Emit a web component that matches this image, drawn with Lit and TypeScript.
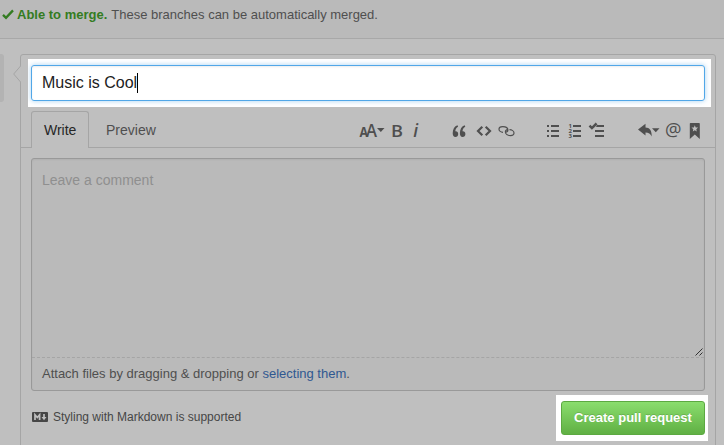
import { LitElement, html, css } from "lit";
import { customElement } from "lit/decorators.js";

@customElement("format-toolbar")
class FormatToolbar extends LitElement {
  static styles = css`
    :host { display: block; color: #4f4f4f; }
    .bar { display: flex; gap: 31px; }
    .group { display: flex; }
    svg { display: block; height: 20px; fill: currentColor; overflow: visible; }
    .text { font-family: "Open Sans", sans-serif; font-weight: 600; }
    .bold { font-weight: 700; }
    .italic { font-style: italic; }
    .num { font: bold 6px "Open Sans", sans-serif; }
    .line { fill: none; stroke: currentColor; }
    .a { gap: 7px; } .b { gap: 9px; } .c { gap: 7px; } .d { gap: 6px; }
    .star { fill: #bfbfbf; }
  `;
  render() {
    return html`<div class="bar">
      <div class="group a">
        <svg width="26" viewBox="0 0 26 20">
          <text class="text bold" x="0.500" y="16" font-size="13.500" textLength="8.500" lengthAdjust="spacingAndGlyphs">A</text>
          <text class="text" x="7" y="16" font-size="17.500" textLength="11" lengthAdjust="spacingAndGlyphs">A</text>
          <path d="M18 7h7.500l-3.700 4z"/>
        </svg>
        <svg width="11" viewBox="0 0 11 20"><text class="text" x="-1" y="16" font-size="17" textLength="12" lengthAdjust="spacingAndGlyphs">B</text></svg>
        <svg width="10" viewBox="0 0 10 20"><text class="text italic" x="3.200" y="16" font-size="17.500">i</text></svg>
      </div>
      <div class="group b">
        <svg width="15" viewBox="0 0 15 20">
          <path d="M6.500 4.200C3.500 5.300 1.700 8 1.700 12.300c0 2.300 1 3.700 2.700 3.700 1.700 0 2.800-1.200 2.800-3 0-1.600-1-2.700-2.400-2.700h-.5c.2-2.200 1.100-3.600 2.800-4.500z"/>
          <path d="M13.700 4.200C10.700 5.300 8.900 8 8.900 12.300c0 2.300 1 3.700 2.700 3.700 1.700 0 2.800-1.200 2.800-3 0-1.600-1-2.700-2.400-2.700h-.5c.2-2.200 1.100-3.600 2.800-4.500z"/>
        </svg>
        <svg width="15" viewBox="0 0 15 20"><path class="line" stroke-width="2.200" d="M7.300 5.700 3 10 7.300 14.300M10.700 5.700 15 10l-4.300 4.300"/></svg>
        <svg width="17" viewBox="0 0 17 20"><path class="line" stroke-width="1.200" d="M4 11.300C2 11.200.0 9.800.0 8.200.0 6.500 1.500 5.600 3.700 5.600c3 0 5.200 1.500 5.200 3.500 0 1.300-1 2.100-2.400 2.200M10.500 8.700c2.300 0 4.500 1.500 4.500 3.400 0 1.600-1.400 2.500-3.500 2.500-3 0-5.100-1.700-5.100-3.500 0-1.300.9-2.200 2.200-2.400"/></svg>
      </div>
      <div class="group c">
        <svg width="15" viewBox="0 0 15 20"><path d="M0 4h2v2H0zM0 9h2v2H0zM0 14h2v2H0zM4 4h8v2H4zM4 9h8v2H4zM4 14h8v2H4z"/></svg>
        <svg width="14" viewBox="0 0 14 20">
          <text class="num" x="-0.500" y="7">1</text><text class="num" x="-0.500" y="12.200">2</text><text class="num" x="-0.500" y="17.400">3</text>
          <path d="M4 4h8v2H4zM4 9h8v2H4zM4 14h8v2H4z"/>
        </svg>
        <svg width="17" viewBox="0 0 17 20"><path d="M7 4h7v2H6zM5 9h9v2H5zM5 14h9v2H5z"/><path class="line" stroke-width="2.500" d="m-.5 4.700 2.400 2.400L6.600 2.500"/></svg>
      </div>
      <div class="group d">
        <svg width="22" viewBox="0 0 22 20"><path d="M0 8.500 7.500 2.800v3.600c4 0 6.500 3 6.200 9.200-1.100-2.900-3.200-4.200-6.200-4.200v3zM14 7.200h7.500l-3.700 4z"/></svg>
        <svg width="17" viewBox="0 0 17 20"><text x="-1" y="15" font-family="Open Sans, sans-serif" font-size="17.500" textLength="16.500" lengthAdjust="spacingAndGlyphs">@</text></svg>
        <svg width="12" viewBox="0 0 12 20"><path d="M1.500 2h8.600q.7 0 .7.700V18l-5-4.500-5 4.500V2.700Q.8 2 1.500 2z"/><path class="star" d="m5.800 4.200.9 2.200 2.400.2-1.800 1.600.5 2.400-2-1.300-2 1.300.5-2.400-1.800-1.600 2.400-.2z"/></svg>
      </div>
    </div>`;
  }
}

@customElement("app-root")
class AppRoot extends LitElement {
  static styles = css`
    :host { display: block; height: 445px; overflow: hidden; background: #bfbfbf; font: 13px "Liberation Sans", Arial, sans-serif; color: #4f4f4f; }
    * { box-sizing: border-box; }
    svg { display: block; }
    .merge { height: 39px; border-bottom: 1px solid #a8a8a8; background: #bababa; display: flex; align-items: center; padding: 0 0 9px 2px; white-space: pre; }
    .merge svg { margin-right: 3px; }
    .able { color: #347c22; font-weight: bold; margin-right: 4px; }
    .main { display: flex; padding-top: 15px; }
    .avatar { width: 4px; height: 48px; background: #b3b3b3; border-radius: 0 3px 3px 0; margin-right: 16px; }
    .card { position: relative; width: 696px; height: 420px; border: 1px solid #a5a5a5; border-radius: 3px; padding-top: 4px; }
    .notch { position: absolute; left: -8px; top: 10px; }
    .focus { width: 683px; height: 48px; margin-left: 7px; padding: 6px 6px 6px 3px; background: #fff; overflow: hidden; }
    .title { height: 36px; border: 1px solid #51a7e8; border-radius: 3px; box-shadow: inset 0 1px 2px rgba(0,0,0,.075), 0 0 5px rgba(81,167,232,.5); display: flex; align-items: center; padding-left: 10px; font-size: 16px; color: #222; }
    .caret { width: 1px; height: 20px; background: #000; }
    .tabs { height: 41px; border-bottom: 1px solid #a5a5a5; display: flex; padding: 4px 0 0 10px; font-size: 14px; }
    .tab { height: 37px; width: 58px; border: 1px solid #a5a5a5; border-bottom: 0; border-radius: 3px 3px 0 0; background: #bfbfbf; color: #262626; padding: 10px 0 0 12px; }
    .preview { padding: 11px 0 0 17px; width: 270px; }
    format-toolbar { margin-top: 10px; }
    .box { margin: 10px 0 0 10px; width: 674px; height: 233px; border: 1px solid #999; border-radius: 3px; background: #bababa; box-shadow: inset 0 1px 2px rgba(0,0,0,.06); }
    .area { height: 199px; border-bottom: 1px dashed #a5a5a5; padding: 13px 0 0 10px; font-size: 14px; color: #8f8f8f; display: flex; justify-content: space-between; }
    .grip { align-self: flex-end; }
    .attach { padding: 8px 0 0 10px; }
    .attach b { font-weight: normal; color: #305891; }
    .bottom { display: flex; justify-content: space-between; padding: 4px 7px 0 11px; }
    .md { display: flex; height: 44px; align-items: center; gap: 5px; font-size: 12px; color: #464646; }
    .cta { width: 152px; height: 46px; background: #fff; padding: 6px 3px 6px 5px; }
    button { display: flex; align-items: center; justify-content: center; width: 144px; height: 34px; padding: 0 0 1px; border: 1px solid #5ca941; border-radius: 3px; background: linear-gradient(#8add6d, #60b044); color: #fff; font: bold 13px "Liberation Sans", sans-serif; text-shadow: 0 -1px 0 rgba(0,0,0,.15); }
  `;
  render() {
    return html`
      <div class="merge">
        <svg width="12" height="12" viewBox="0 0 12 12" fill="none" stroke="#347c22" stroke-width="2.300"><path d="m1 5.900 3 3 7-7.500"/></svg>
        <span class="able">Able to merge.</span><span>These branches can be automatically merged.</span>
      </div>
      <div class="main">
        <div class="avatar"></div>
        <div class="card">
          <svg class="notch" width="8" height="18" viewBox="0 0 8 18"><path d="M8 .5.700 9 8 17.500" fill="#bfbfbf" stroke="#a5a5a5"/></svg>
          <div class="focus"><div class="title"><span>Music is Cool</span><i class="caret"></i></div></div>
          <div class="tabs"><div class="tab"><span>Write</span></div><div class="preview"><span>Preview</span></div><format-toolbar></format-toolbar></div>
          <div class="box">
            <div class="area"><span>Leave a comment</span><svg class="grip" width="9" height="9" viewBox="0 0 9 9" stroke="#333" fill="none"><path d="m.5 7.500 7-7M4.500 7.500l3-3"/></svg></div>
            <div class="attach"><span>Attach files by dragging &amp; dropping or <b>selecting them</b>.</span></div>
          </div>
          <div class="bottom">
            <div class="md"><svg width="16" height="10" viewBox="0 0 16 10"><rect width="16" height="10" rx="1" fill="#464646"/><path fill="none" stroke="#bfbfbf" stroke-width="1.700" d="M3 8V2.800l2.300 2.700 2.300-2.700V8M12 2v4"/><path fill="#bfbfbf" d="M9.500 5h5L12 8.300z"/></svg><span>Styling with Markdown is supported</span></div>
            <div class="cta"><button>Create pull request</button></div>
          </div>
        </div>
      </div>`;
  }
}
